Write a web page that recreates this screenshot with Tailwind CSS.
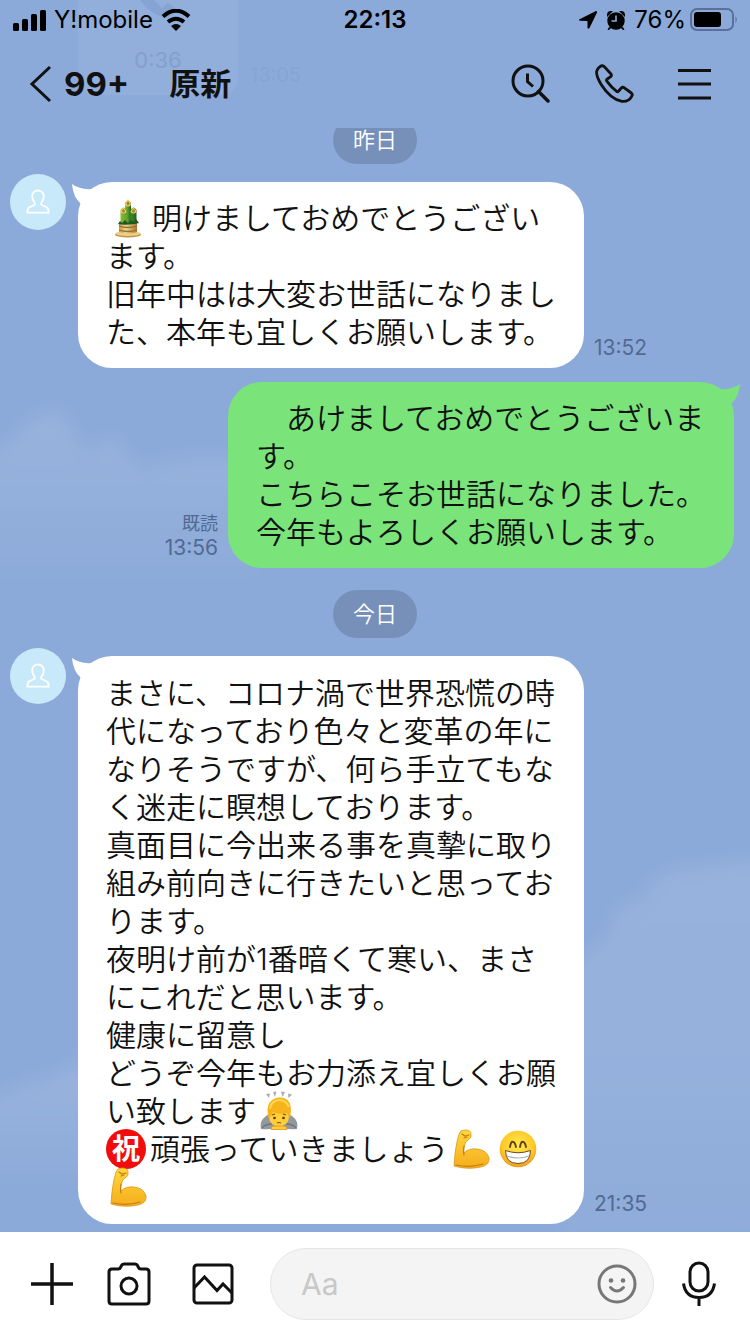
<!DOCTYPE html>
<html lang="ja">
<head>
    <meta charset="UTF-8">
    <meta name="viewport" content="width=device-width, initial-scale=1.0">
    <title>原新</title>
    <script src="https://cdn.jsdelivr.net/npm/@tailwindcss/browser@4"></script>
</head>
<body class="relative flex min-h-screen flex-col overflow-x-hidden bg-[#8caad9] font-['Inter','Noto_Sans_CJK_JP',sans-serif] text-[#111]">
    <!-- アイコンと絵文字 -->
    <svg class="absolute size-0" aria-hidden="true">
        <linearGradient id="skin" x1="0" y1="0" x2="0" y2="1">
            <stop offset="0" stop-color="#ffd83c"/><stop offset="1" stop-color="#f5ad1d"/>
        </linearGradient>
        <linearGradient id="bamboo" x1="0" y1="0" x2="1" y2="0">
            <stop offset="0" stop-color="#8dbb35"/><stop offset=".5" stop-color="#4f9a2a"/><stop offset="1" stop-color="#1f641d"/>
        </linearGradient>
        <linearGradient id="straw" x1="0" y1="0" x2="1" y2="0">
            <stop offset="0" stop-color="#c79a4a"/><stop offset=".4" stop-color="#f0d58c"/><stop offset="1" stop-color="#a87530"/>
        </linearGradient>
        <radialGradient id="face" cx=".5" cy=".4" r=".62">
            <stop offset="0" stop-color="#ffe94f"/><stop offset=".7" stop-color="#ffc928"/><stop offset="1" stop-color="#ee8f16"/>
        </radialGradient>
        <symbol id="person" viewBox="0 0 24 26">
            <path d="M12 1.500c-3.400 0-5.800 2.600-5.800 6 0 2.500 1 4.600 2.400 6.200.8 1 .3 2-.8 2.500L3.300 18.300C1.800 19.200 1.300 21 1.300 23.700h21.400c0-2.700-.5-4.500-2-5.400L16.200 16.200c-1.100-.5-1.600-1.500-.8-2.500 1.400-1.600 2.400-3.700 2.400-6.200 0-3.400-2.400-6-5.800-6z" fill="none" stroke="#fff" stroke-width="1.800" stroke-linejoin="round"/>
        </symbol>
        <symbol id="tail" viewBox="0 0 24 22">
            <path d="M0 0Q8 6 20 5L24 10L12 22L9 20Q1 13 0 0z" fill="currentColor"/>
        </symbol>
        <symbol id="kadomatsu" viewBox="0 0 44 40">
            <ellipse cx="21" cy="36.500" rx="13" ry="3" fill="#c49343"/>
            <ellipse cx="21" cy="35.500" rx="12.500" ry="2.500" fill="#ead08b"/>
            <path d="M12 25h18v9q-9 3-18 0z" fill="url(#straw)"/>
            <path d="M12 28q9 3 18 0M12 32q9 3 18 0" fill="none" stroke="#97712e" stroke-width="1.300"/>
            <path d="M18 5q3-5 6 0v20h-6z" fill="url(#bamboo)"/>
            <path d="M13.500 12q3-5 6 0v14h-6zM23.500 12q3-5 6 0v14h-6z" fill="url(#bamboo)"/>
            <path d="M18 7q3-11 6 0-3 3-6 0zM13.500 14q3-8 6 0-3 3-6 0zM23.500 14q3-8 6 0-3 3-6 0z" fill="#f2cf6b"/>
            <ellipse cx="21" cy="5.500" rx="1.400" ry="2" fill="#af7c27"/>
            <ellipse cx="16.500" cy="13" rx="1.400" ry="1.800" fill="#af7c27"/>
            <ellipse cx="26.500" cy="13" rx="1.400" ry="1.800" fill="#af7c27"/>
            <path d="M11 26l2-3 2 2 3-3 3 3 3-3 2 2 3-3 3 4q-11 3-22 1z" fill="#22581f"/>
        </symbol>
        <symbol id="bow" viewBox="0 0 44 40">
            <path d="M9 3l3 4 1-4.500zM16 1l2 5 1.500-5.500zM24 .5l1.500 5.500L28 1zM31 2.500L31.500 7 35 3.500z" fill="#a9adb2"/>
            <path d="M4 38q-2-8 5-13l5-3h16l5 3q7 5 5 13-7 1-14-1H18q-7 2-14 1z" fill="#93989f"/>
            <path d="M5 37q3-4 10-4M39 37q-3-4-10-4" stroke="#70757c" stroke-width="1.500" fill="none"/>
            <ellipse cx="22" cy="26" rx="10" ry="9.500" fill="#ffce38"/>
            <path d="M11.500 27Q9 16 13 11q7-7 16-3 7 4 4 19-2-1-3-5-8 2-14-1-1 4-4.500 6z" fill="#f6b31b"/>
            <path d="M13 18q1-8 9-9 7 0 10 7" stroke="#ffd84e" stroke-width="2" fill="none"/>
            <circle cx="17.500" cy="27" r="1.300" fill="#523617"/><circle cx="26.500" cy="27" r="1.300" fill="#523617"/>
            <path d="M15 24l3-1M29 24l-3-1M20 32q2-1 4 0" stroke="#7a501a" stroke-width="1.200" fill="none"/>
            <path d="M14 38.500q0-4 5-3.500h6q5-.5 5 3.500z" fill="#ffce38" stroke="#dd9718" stroke-width=".8"/>
        </symbol>
        <symbol id="arm" viewBox="0 0 44 40">
            <path d="M4 37Q5 18 9 5q1-4 6-4 6 0 6 4 1 4-3 6-3 2-3 4-2 5-1 9 5-5 13-4 10 1 12 9 1 7-8 9-14 3-27-1z" fill="url(#skin)" stroke="#dd9718" stroke-width=".8"/>
            <path d="M12 5l3 2 4-1M14 9l3-1M14 17q-1 5 0 9M6 36q14 3 27-1" stroke="#c47d13" stroke-width="1.200" fill="none" stroke-linecap="round"/>
        </symbol>
        <symbol id="grin" viewBox="0 0 44 40">
            <circle cx="22" cy="20" r="18.300" fill="url(#face)"/>
            <path d="M14 18q1-6 3-5 2 0 3 5M24 18q1-6 3-5 2 0 3 5" stroke="#674014" stroke-width="1.900" fill="none" stroke-linecap="round"/>
            <path d="M9.500 21.500q12.500 4.500 25 0 0 13-12.500 13t-12.500-13z" fill="#fff" stroke="#6d4a20" stroke-width="1"/>
            <path d="M11 27q11 4 22 0" stroke="#aab0b5" stroke-width="1.200" fill="none"/>
        </symbol>
    </svg>

    <!-- 背景の雲 -->
    <svg class="pointer-events-none absolute inset-0 h-full w-full" viewBox="0 0 750 1334" preserveAspectRatio="none" aria-hidden="true">
        <defs>
            <filter id="soft" x="-20%" y="-20%" width="140%" height="140%"><feGaussianBlur stdDeviation="9"/></filter>
            <linearGradient id="cloud" x1="0" y1="0" x2="0" y2="1">
                <stop offset="0" stop-color="#fff" stop-opacity=".11"/><stop offset="1" stop-color="#fff" stop-opacity="0"/>
            </linearGradient>
            <linearGradient id="cloud2" x1="0" y1="0" x2="0" y2="1">
                <stop offset="0" stop-color="#fff" stop-opacity=".1"/><stop offset=".5" stop-color="#fff" stop-opacity=".08"/><stop offset="1" stop-color="#fff" stop-opacity=".02"/>
            </linearGradient>
        </defs>
        <path filter="url(#soft)" fill="url(#cloud)" d="M-20 450Q10 450 20 432Q35 412 62 414Q72 430 85 455Q98 438 120 440Q124 460 150 468Q180 450 260 460V590H-20z"/>
        <path filter="url(#soft)" fill="url(#cloud2)" d="M560 990Q585 945 610 940Q608 905 645 900Q650 870 700 868L770 860V1240H560z"/>
        <path filter="url(#soft)" fill="url(#cloud)" d="M-20 1100Q10 1095 28 1082L52 1080Q60 1065 90 1066V1190H-20z"/>
    </svg>

    <!-- ヘッダーの下に透けている通話の吹き出し -->
    <div class="pointer-events-none absolute left-0 top-0 flex items-end gap-3 pl-[78px]" aria-hidden="true">
        <div class="relative flex h-[95px] w-40 flex-col items-center justify-end rounded-b-2xl bg-white/5 pb-[25px] text-[22px] leading-5 text-[#829fce]">
            <svg class="absolute left-15 top-0" width="44" height="20" viewBox="0 0 44 20" fill="none"><path d="M2 0Q14 16 30 18L40 10 30 3 24 8 16 0" fill="#86a4d3"/></svg>
            <span>0:36</span>
        </div>
        <span class="pb-2 text-xl leading-6 text-[#86a4d3]">13:05</span>
    </div>

    <header class="relative">
        <!-- ステータスバー -->
        <div class="grid h-10 grid-cols-[1fr_auto_1fr] items-center px-3 text-2xl leading-7 text-black">
            <div class="flex items-center gap-2">
                <svg width="34" height="22" viewBox="0 0 34 22"><rect x="1" y="14" width="6" height="8" rx="1.500"/><rect x="10" y="10" width="6" height="12" rx="1.500"/><rect x="19" y="5" width="6" height="17" rx="1.500"/><rect x="28" y="1" width="6" height="21" rx="1.500"/></svg>
                <span>Y!mobile</span>
                <svg width="30" height="22" viewBox="0 0 30 22"><path d="M2 7.500Q15-4 28 7.500M7 13q8-6.500 16 0" fill="none" stroke="#000" stroke-width="4"/><path d="M10 17q5-4 10 0l-5 5z"/></svg>
            </div>
            <span class="font-semibold">22:13</span>
            <div class="flex items-center justify-end gap-2">
                <svg width="20" height="20" viewBox="0 0 20 20"><path d="M1 9.500L18 1q1.500 0 1 1.500L11.500 18q-1.500 1.500-2 0V11L2 10.800Q.500 10.500 1 9.500z"/></svg>
                <svg width="20" height="20" viewBox="0 0 20 20"><circle cx="10" cy="11" r="8.700"/><path d="M1 5q0-4 4-4l2 0-6 6zM19 5q0-4-4-4l-2 0 6 6zM3 17l2 1-2 2H1.500zM17 17l-2 1 2 2h1.500z"/><path d="M10 5.500V11H5.500" fill="none" stroke="#8caad9" stroke-width="1.600"/></svg>
                <span>76%</span>
                <svg class="-ml-1" width="48" height="24" viewBox="0 0 48 24"><rect x="1" y="1" width="42" height="21" rx="6" fill="none" stroke="#58709a" stroke-width="2"/><rect x="4" y="4" width="27" height="15" rx="3"/><path d="M45.500 8q2.500 3.500 0 7z" fill="#58709a"/></svg>
            </div>
        </div>

        <!-- ナビゲーション -->
        <nav class="flex h-[88px] items-center pl-7 pr-9">
            <button type="button" aria-label="戻る 99+" class="flex items-center gap-3">
                <svg width="24" height="38" viewBox="0 0 24 38" fill="none" stroke="#111" stroke-width="3"><path d="M22 2L4 19l18 17"/></svg>
                <span class="text-[33px] font-bold leading-10">99+</span>
            </button>
            <h1 class="pl-10 text-[31px] font-bold leading-7">原新</h1>
            <div class="ml-auto flex items-center gap-11 text-[#111]">
                <button type="button" aria-label="検索">
                    <svg width="40" height="40" viewBox="0 0 40 40" fill="none" stroke="currentColor" stroke-width="3"><circle cx="18" cy="17" r="15"/><path d="M28.500 27.500L38 37" stroke-width="3.500" stroke-linecap="round"/><path d="M17.500 9.500v8l5.500 5"/></svg>
                </button>
                <button type="button" aria-label="通話">
                    <svg width="40" height="40" viewBox="0 0 120 120" fill="none" stroke="currentColor" stroke-width="8.500" stroke-linejoin="round"><path d="M18 8Q26 2 33 10L51 30Q54 34 50 38L40 45Q36 48 39 52Q52 70 68 82Q71 85 74 81L82 72Q86 68 90 71L112 87Q117 91 113 97Q104 114 84 112Q50 106 22 62Q6 36 8 22Q10 14 18 8z"/></svg>
                </button>
                <button type="button" aria-label="メニュー">
                    <svg width="36" height="34" viewBox="0 0 36 34" stroke="currentColor" stroke-width="3"><path d="M0 3.500h33M0 17h33M0 31h33"/></svg>
                </button>
            </div>
        </nav>
    </header>

    <!-- トーク -->
    <main class="relative flex flex-1 flex-col overflow-hidden pb-2 text-[30px] font-[350] leading-[38px]">
        <div class="-mt-3 self-center rounded-full bg-[#7690b9] px-5 py-2 text-[22px] leading-8 text-white">昨日</div>

        <div class="mt-[10px] flex items-start pl-[10px]">
            <div class="flex size-14 shrink-0 items-center justify-center rounded-full bg-[#c8e9fa]">
                <svg width="24" height="26"><use href="#person"/></svg>
            </div>
            <div class="ml-3 mt-2 flex items-end gap-[10px]">
                <div class="relative w-[506px] rounded-[34px] bg-white px-7 py-[17px]">
                    <svg class="absolute -left-[6px] top-[2px] text-white" width="24" height="22"><use href="#tail"/></svg>
                    <p><svg class="-mb-1.5 -mt-3 inline-block align-middle" width="46" height="40" role="img" aria-label="門松"><use href="#kadomatsu"/></svg>明けましておめでとうございます。<br>旧年中はは大変お世話になりました、本年も宜しくお願いします。</p>
                </div>
                <time class="pb-2 text-[21px] font-normal leading-6 text-[#526a92]">13:52</time>
            </div>
        </div>

        <div class="mt-[14px] flex items-end justify-end gap-[10px] pr-4">
            <div class="flex flex-col items-end pb-2 text-[21px] font-normal leading-6 text-[#526a92]">
                <span class="text-lg leading-6">既読</span>
                <time>13:56</time>
            </div>
            <div class="relative w-[506px] rounded-[34px] bg-[#7ae47b] px-7 py-[17px]">
                <svg class="absolute -right-[6px] top-[2px] -scale-x-100 text-[#7ae47b]" width="24" height="22"><use href="#tail"/></svg>
                <p>　あけましておめでとうございます。<br>こちらこそお世話になりました。<br>今年もよろしくお願いします。</p>
            </div>
        </div>

        <div class="mt-[22px] self-center rounded-full bg-[#7690b9] px-5 py-2 text-[22px] leading-8 text-white">今日</div>

        <div class="mt-[10px] flex items-start pl-[10px]">
            <div class="flex size-14 shrink-0 items-center justify-center rounded-full bg-[#c8e9fa]">
                <svg width="24" height="26"><use href="#person"/></svg>
            </div>
            <div class="ml-3 mt-2 flex items-end gap-[10px]">
                <div class="relative w-[506px] rounded-[34px] bg-white px-7 py-[18px]">
                    <svg class="absolute -left-[6px] top-[2px] text-white" width="24" height="22"><use href="#tail"/></svg>
                    <p>まさに、コロナ渦で世界恐慌の時代になっており色々と変革の年になりそうですが、何ら手立てもなく迷走に瞑想しております。<br>真面目に今出来る事を真摯に取り組み前向きに行きたいと思っております。<br>夜明け前が1番暗くて寒い、まさにこれだと思います。<br>健康に留意し<br>どうぞ今年もお力添え宜しくお願い致します<svg class="-mb-1.5 -mt-3 inline-block align-middle" width="46" height="40" role="img" aria-label="お辞儀"><use href="#bow"/></svg><br><span class="-mb-1.5 -mt-3 mr-1 inline-flex size-10 items-center justify-center rounded-full bg-[#f20d0d] align-middle text-[28px] font-bold leading-[38px] text-white">祝</span>頑張っていきましょう<svg class="-mb-1.5 -mt-3 inline-block align-middle" width="46" height="40" role="img" aria-label="力こぶ"><use href="#arm"/></svg><svg class="-mb-1.5 -mt-3 inline-block align-middle" width="46" height="40" role="img" aria-label="笑顔"><use href="#grin"/></svg><br><svg class="-mb-1.5 -mt-3 inline-block align-middle" width="46" height="40" role="img" aria-label="力こぶ"><use href="#arm"/></svg></p>
                </div>
                <time class="pb-2 text-[21px] font-normal leading-6 text-[#526a92]">21:35</time>
            </div>
        </div>
    </main>

    <!-- 入力欄 -->
    <footer class="relative flex h-[102px] items-start bg-white pl-[30px] pr-[34px] pt-4 text-[#111]">
        <div class="flex h-[72px] items-center gap-9">
            <button type="button" aria-label="追加">
                <svg width="44" height="44" viewBox="0 0 44 44" stroke="currentColor" stroke-width="3.500"><path d="M1 22h42M22 1v42"/></svg>
            </button>
            <button type="button" aria-label="カメラ" class="-ml-1">
                <svg width="46" height="44" viewBox="0 0 46 44" fill="none" stroke="currentColor" stroke-width="3" stroke-linejoin="round"><path d="M6 7h6q2 0 2.500-1.500L15.500 3.500Q16 2 18 2h11q2 0 2.500 1.500l1 2Q33 7 35 7h5q3 0 3 3v29q0 3-3 3H6q-3 0-3-3V10q0-3 3-3z"/><circle cx="23" cy="24" r="8"/></svg>
            </button>
            <button type="button" aria-label="写真">
                <svg width="48" height="44" viewBox="0 0 48 44" fill="none" stroke="currentColor" stroke-width="3"><rect x="6" y="3" width="38" height="38" rx="3"/><path d="M6 26l10.500-11L29 28.500l6-6.500 9 9"/></svg>
            </button>
        </div>
        <div class="ml-[34px] mr-7 flex h-[72px] min-w-0 flex-1 items-center rounded-full border border-[#e6e6e6] bg-[#f4f4f4] pl-[30px] pr-4">
            <input type="text" aria-label="メッセージ" placeholder="Aa" class="min-w-0 flex-1 bg-transparent text-[30px] leading-9 outline-none placeholder:text-[#c8c8c8]">
            <button type="button" aria-label="スタンプ" class="text-[#777]">
                <svg width="40" height="40" viewBox="0 0 40 40" fill="none" stroke="currentColor" stroke-width="3"><circle cx="20" cy="20" r="18"/><circle cx="14" cy="16.500" r="2.300" fill="currentColor" stroke="none"/><circle cx="26" cy="16.500" r="2.300" fill="currentColor" stroke="none"/><path d="M13.500 23.500q6.500 7 13 0" stroke-linecap="round"/></svg>
            </button>
        </div>
        <button type="button" aria-label="ボイスメッセージ" class="flex h-[72px] items-center">
            <svg width="34" height="46" viewBox="0 0 34 46" fill="none" stroke="currentColor" stroke-width="3"><rect x="8" y="2" width="18" height="28" rx="9"/><path d="M1.500 22.500Q3.500 36.500 17 36.500T32.500 22.500M17 36.500V45"/></svg>
        </button>
    </footer>
</body>
</html>
